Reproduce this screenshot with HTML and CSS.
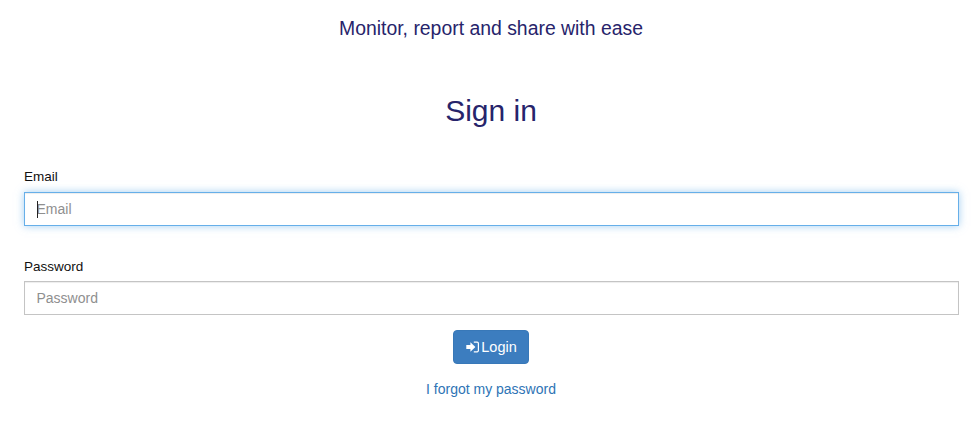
FILE: index.html
```html
<!DOCTYPE html>
<html>
<head>
    <title>Sign in</title>
    <link rel="stylesheet" href="styles.css">
</head>
<body>
    <p class="tagline">Monitor, report and share with ease</p>
    <h1 class="title">Sign in</h1>

    <form class="login-form">
        <div class="form-group">
            <label for="email">Email</label>
            <div class="input-wrap">
                <input class="form-control is-focused" id="email" type="text" placeholder="Email">
                <span class="caret"></span>
            </div>
        </div>
        <div class="form-group form-group-last">
            <label for="password">Password</label>
            <input class="form-control" id="password" type="password" placeholder="Password">
        </div>
        <div class="actions">
            <button class="btn-login" type="button">
                <svg class="icon" viewBox="0 0 14 14" width="14" height="14">
                    <path fill="#fff" d="M0.3 5H4.4V2.2L9.4 7L4.4 11.8V9H0.3Z"/>
                    <path fill="#fff" d="M7.8 1.5H11.2C12.2 1.5 13 2.3 13 3.4V10.6C13 11.7 12.2 12.5 11.2 12.5H7.8V11.2H10.8C11.4 11.2 11.8 10.8 11.8 10.2V3.8C11.8 3.2 11.4 2.8 10.8 2.8H7.8Z"/>
                </svg>
                Login
            </button>
            <a class="forgot-link" href="#">I forgot my password</a>
        </div>
    </form>
</body>
</html>
```

FILE: styles.css
```css
body {
    font-family: "Liberation Sans", Arial, sans-serif;
    font-size: 14px;
    line-height: 20px;
    color: #111;
    background-color: #fff;
    margin: 0;
    padding: 0 20px 0 24px;
}
.tagline {
    margin: 0;
    padding: 16px 1px 0 0;
    font-size: 19.4px;
    line-height: 24px;
    text-align: center;
    color: #27246b;
}
.title {
    margin: 48px 0 0;
    padding-right: 1px;
    font-size: 30px;
    font-weight: 400;
    line-height: 46px;
    text-align: center;
    color: #27246b;
}
.login-form {
    margin-top: 33px;
}
.form-group {
    margin-bottom: 31px;
}
.form-group-last {
    margin-bottom: 15px;
}
.form-group-last label {
    margin-bottom: 4px;
}
label {
    display: block;
    margin-bottom: 5px;
    font-size: 13.5px;
    line-height: 20px;
}
.input-wrap {
    position: relative;
}
.form-control {
    display: block;
    box-sizing: border-box;
    width: 100%;
    height: 34px;
    padding: 6px 12px 6px 11.5px;
    font-family: inherit;
    font-size: 14px;
    color: #555;
    background-color: #fff;
    border: 1px solid #c4c4c4;
    border-radius: 0;
    box-shadow: inset 0 1px 1px rgba(0, 0, 0, 0.075);
    outline: none;
}
.form-control::placeholder {
    color: #8f8f8f;
    opacity: 1;
}
.form-control.is-focused {
    border-color: #66afe9;
    box-shadow: inset 0 1px 1px rgba(0, 0, 0, 0.075), 0 0 8px rgba(102, 175, 233, 0.6);
}
.caret {
    position: absolute;
    left: 13px;
    top: 9px;
    width: 1px;
    height: 17px;
    background-color: #222;
}
.actions {
    display: flex;
    flex-direction: column;
    align-items: center;
    padding-right: 1px;
}
.btn-login {
    display: flex;
    align-items: center;
    gap: 1px;
    box-sizing: border-box;
    height: 34px;
    padding: 0 11px 0 12px;
    font-family: inherit;
    font-size: 14.5px;
    color: #fff;
    background-color: #3c7dbf;
    border: 1px solid #3878b8;
    border-radius: 4px;
    cursor: pointer;
}
.forgot-link {
    margin-top: 15px;
    font-size: 14px;
    color: #2e74b5;
    text-decoration: none;
}
```
